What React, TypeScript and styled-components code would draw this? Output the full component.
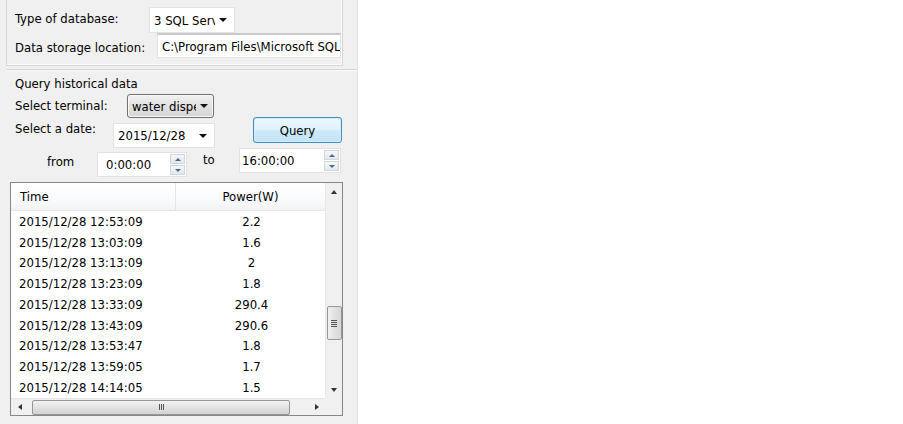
import React from "react";
import styled, { createGlobalStyle } from "styled-components";

const FONT = `"DejaVu Sans Condensed", "Liberation Sans", Arial, sans-serif`;

const Global = createGlobalStyle`
  html, body { margin: 0; padding: 0; background: #ffffff; }
  body { font-family: ${FONT}; font-size: 13px; color: #000; }
  * { box-sizing: border-box; }
`;

const Page = styled.div`
  width: 903px;
  height: 424px;
  display: flex;
  background: #fff;
`;

const Panel = styled.div`
  width: 358px;
  height: 424px;
  background: #f0f0f0;
  border-right: 1px solid #e3e3e3;
  display: flex;
  flex-direction: column;
`;

const TopGroup = styled.div`
  margin-left: 6px;
  width: 337px;
  height: 66px;
  border: 1px solid #d6d6d6;
  border-top: none;
  box-shadow: inset -1px -1px 0 #fafafa;
  padding: 7px 0 0 8px;
  display: flex;
  flex-direction: column;
  gap: 4px;
`;

const Row = styled.div<{ $h?: number; $mt?: number; $pl?: number }>`
  display: flex;
  align-items: flex-start;
  height: ${(p) => p.$h ?? 24}px;
  margin-top: ${(p) => p.$mt ?? 0}px;
  padding-left: ${(p) => p.$pl ?? 0}px;
`;

const Label = styled.div<{ $w?: number; $mt?: number; $pl?: number }>`
  width: ${(p) => (p.$w ? `${p.$w}px` : "auto")};
  flex: none;
  margin-top: ${(p) => p.$mt ?? 0}px;
  padding-left: ${(p) => p.$pl ?? 0}px;
  line-height: 16px;
  white-space: nowrap;
`;

const WhiteCombo = styled.div<{ $w: number; $h: number; $mt?: number }>`
  width: ${(p) => p.$w}px;
  height: ${(p) => p.$h}px;
  margin-top: ${(p) => p.$mt ?? 0}px;
  flex: none;
  background: #fff;
  border: 1px solid #e2e2e2;
  display: flex;
  align-items: center;
  padding-left: 4px;
  padding-right: 7px;
  overflow: hidden;
  white-space: nowrap;
`;

const ComboText = styled.span`
  flex: 1;
  overflow: hidden;
  white-space: nowrap;
`;

const Arrow = styled.span`
  flex: none;
  width: 0;
  height: 0;
  border-left: 4px solid transparent;
  border-right: 4px solid transparent;
  border-top: 4px solid #111;
  margin-left: 4px;
`;

const TextInput = styled.div<{ $w: number }>`
  width: ${(p) => p.$w}px;
  height: 25px;
  flex: none;
  background: #fff;
  border: 1px solid #e2e2e2;
  border-top: 2px solid #c9c9c9;
  display: flex;
  align-items: center;
  padding-left: 4px;
  overflow: hidden;
  white-space: nowrap;
  margin-top: -4px;
`;

const QuerySection = styled.div`
  margin-top: 3px;
  margin-left: 6px;
  border-top: 1px solid #d6d6d6;
  box-shadow: inset 0 1px 0 #fafafa;
  padding: 6px 0 0 9px;
  display: flex;
  flex-direction: column;
`;

const SectionTitle = styled.div`
  line-height: 16px;
  height: 16px;
`;

const ButtonCombo = styled.div`
  width: 87px;
  height: 24px;
  flex: none;
  border: 1px solid #707070;
  border-radius: 3px;
  background: linear-gradient(#f2f2f2, #e1e1e1 50%, #d6d6d6);
  box-shadow: inset 0 0 0 1px #fafafa;
  display: flex;
  align-items: center;
  padding-left: 4px;
  padding-right: 5px;
  overflow: hidden;
`;

const QueryButton = styled.button<{ $ml: number }>`
  margin-left: ${(p) => p.$ml}px;
  width: 89px;
  height: 26px;
  flex: none;
  border: 1px solid #3c8fc4;
  border-radius: 3px;
  background: linear-gradient(#eef8fd, #e0f2fb 48%, #cfeaf8 52%, #c2e3f5);
  box-shadow: inset 0 0 0 1px #d6eefa;
  font-family: ${FONT};
  font-size: 13px;
  color: #000;
  padding: 0;
`;

const Spin = styled.div<{ $w: number; $mt?: number }>`
  width: ${(p) => p.$w}px;
  height: 25px;
  flex: none;
  margin-top: ${(p) => p.$mt ?? 0}px;
  background: #fff;
  border: 1px solid #e2e2e2;
  display: flex;
  align-items: center;
  padding-left: 2px;
`;

const SpinText = styled.span<{ $pl?: number }>`
  flex: 1;
  padding-left: ${(p) => p.$pl ?? 0}px;
`;

const SpinButtons = styled.div`
  width: 15px;
  height: 21px;
  margin-right: 1px;
  display: flex;
  flex-direction: column;
  gap: 1px;
`;

const SpinBtn = styled.div<{ $up?: boolean }>`
  flex: 1;
  border: 1px solid #d2d7de;
  background: linear-gradient(#f5f7f9, #e3e8ee);
  display: flex;
  align-items: center;
  justify-content: center;
  &::after {
    content: "";
    width: 0;
    height: 0;
    border-left: 3px solid transparent;
    border-right: 3px solid transparent;
    ${(p) =>
      p.$up
        ? "border-bottom: 3px solid #4d6a8c;"
        : "border-top: 3px solid #4d6a8c;"}
  }
`;

const ListBox = styled.div`
  margin: 5px 0 0 10px;
  width: 333px;
  height: 234px;
  border: 1px solid #828790;
  background: #fff;
  display: grid;
  grid-template-columns: 1fr 17px;
  grid-template-rows: 1fr 17px;
`;

const ListArea = styled.div`
  overflow: hidden;
  display: flex;
  flex-direction: column;
`;

const Header = styled.div`
  height: 28px;
  flex: none;
  display: flex;
  background: linear-gradient(#ffffff, #fafbfc 60%, #f2f3f5);
  border-bottom: 1px solid #e5e5e5;
`;

const HeadCell = styled.div<{ $w?: number; $center?: boolean }>`
  width: ${(p) => (p.$w ? `${p.$w}px` : "auto")};
  flex: ${(p) => (p.$w ? "none" : "1")};
  display: flex;
  align-items: center;
  justify-content: ${(p) => (p.$center ? "center" : "flex-start")};
  padding-left: ${(p) => (p.$center ? 0 : 9)}px;
  border-right: ${(p) => (p.$w ? "1px solid #e5e5e5" : "none")};
`;

const DataRow = styled.div`
  height: 20.75px;
  flex: none;
  display: flex;
  align-items: center;
`;

const TimeCell = styled.div`
  width: 165px;
  padding-left: 8px;
  white-space: nowrap;
`;

const ValueCell = styled.div`
  flex: 1;
  text-align: center;
  padding-left: 2px;
`;

const VScroll = styled.div`
  background: #f0f0f0;
  border-left: 1px solid #e8e8e8;
  display: flex;
  flex-direction: column;
  align-items: center;
`;

const ScrollArrow = styled.div<{ $dir: "up" | "down" | "left" | "right" }>`
  width: 17px;
  height: 17px;
  flex: none;
  display: flex;
  align-items: center;
  justify-content: center;
  &::after {
    content: "";
    width: 0;
    height: 0;
    ${(p) =>
      p.$dir === "up"
        ? "border-left:3.5px solid transparent;border-right:3.5px solid transparent;border-bottom:4px solid #333;"
        : p.$dir === "down"
        ? "border-left:3.5px solid transparent;border-right:3.5px solid transparent;border-top:4px solid #333;"
        : p.$dir === "left"
        ? "border-top:3.5px solid transparent;border-bottom:3.5px solid transparent;border-right:4px solid #333;"
        : "border-top:3.5px solid transparent;border-bottom:3.5px solid transparent;border-left:4px solid #333;"}
  }
`;

const VTrack = styled.div`
  flex: 1;
  width: 100%;
  display: flex;
  flex-direction: column;
  padding-top: 106px;
  align-items: center;
`;

const VThumb = styled.div`
  width: 15px;
  height: 34px;
  border: 1px solid #979797;
  border-radius: 2px;
  background: linear-gradient(90deg, #f0f0f0, #e2e2e2 50%, #d6d6d6);
  display: flex;
  flex-direction: column;
  align-items: center;
  justify-content: center;
  gap: 1px;
`;

const GripLineH = styled.div`
  width: 6px;
  height: 1px;
  background: #555;
`;

const HScroll = styled.div`
  background: #f0f0f0;
  border-top: 1px solid #e8e8e8;
  display: flex;
  align-items: center;
`;

const HTrack = styled.div`
  flex: 1;
  height: 100%;
  display: flex;
  align-items: center;
  padding-left: 4px;
  padding-right: 18px;
`;

const HThumb = styled.div`
  flex: 1;
  height: 15px;
  border: 1px solid #979797;
  border-radius: 2px;
  background: linear-gradient(#f2f2f2, #e2e2e2 50%, #d3d3d3);
  display: flex;
  align-items: center;
  justify-content: center;
  gap: 1px;
`;

const GripLineV = styled.div`
  width: 1px;
  height: 6px;
  background: #555;
`;

const Corner = styled.div`
  background: #f0f0f0;
`;

const rows: [string, string][] = [
  ["2015/12/28 12:53:09", "2.2"],
  ["2015/12/28 13:03:09", "1.6"],
  ["2015/12/28 13:13:09", "2"],
  ["2015/12/28 13:23:09", "1.8"],
  ["2015/12/28 13:33:09", "290.4"],
  ["2015/12/28 13:43:09", "290.6"],
  ["2015/12/28 13:53:47", "1.8"],
  ["2015/12/28 13:59:05", "1.7"],
  ["2015/12/28 14:14:05", "1.5"],
];

export default function App() {
  return (
    <>
      <Global />
      <Page>
        <Panel>
          <TopGroup>
            <Row $h={26}>
              <Label $w={134} $mt={4}>Type of database:</Label>
              <WhiteCombo $w={86} $h={26}>
                <ComboText>3 SQL Server</ComboText>
                <Arrow />
              </WhiteCombo>
            </Row>
            <Row $h={25}>
              <Label $w={142} $mt={3}>Data storage location:</Label>
              <TextInput $w={184}>C:\Program Files\Microsoft SQL Server</TextInput>
            </Row>
          </TopGroup>
          <QuerySection>
            <SectionTitle>Query historical data</SectionTitle>
            <Row $h={24} $mt={2}>
              <Label $w={112} $mt={4}>Select terminal:</Label>
              <ButtonCombo>
                <ComboText>water dispenser</ComboText>
                <Arrow />
              </ButtonCombo>
            </Row>
            <Row $h={31} $mt={-1}>
              <Label $w={98} $mt={4}>Select a date:</Label>
              <WhiteCombo $w={102} $h={25} $mt={6}>
                <ComboText>2015/12/28</ComboText>
                <Arrow />
              </WhiteCombo>
              <QueryButton $ml={38}>Query</QueryButton>
            </Row>
            <Row $h={29} $pl={32}>
              <Label $w={50} $mt={6}>from</Label>
              <Spin $w={90} $mt={4}>
                <SpinText $pl={6}>0:00:00</SpinText>
                <SpinButtons>
                  <SpinBtn $up />
                  <SpinBtn />
                </SpinButtons>
              </Spin>
              <Label $w={52} $mt={4} $pl={16}>to</Label>
              <Spin $w={102}>
                <SpinText>16:00:00</SpinText>
                <SpinButtons>
                  <SpinBtn $up />
                  <SpinBtn />
                </SpinButtons>
              </Spin>
            </Row>
          </QuerySection>
          <ListBox>
            <ListArea>
              <Header>
                <HeadCell $w={165}>Time</HeadCell>
                <HeadCell $center>Power(W)</HeadCell>
              </Header>
              {rows.map(([t, v]) => (
                <DataRow key={t}>
                  <TimeCell>{t}</TimeCell>
                  <ValueCell>{v}</ValueCell>
                </DataRow>
              ))}
            </ListArea>
            <VScroll>
              <ScrollArrow $dir="up" />
              <VTrack>
                <VThumb>
                  <GripLineH />
                  <GripLineH />
                  <GripLineH />
                  <GripLineH />
                </VThumb>
              </VTrack>
              <ScrollArrow $dir="down" />
            </VScroll>
            <HScroll>
              <ScrollArrow $dir="left" />
              <HTrack>
                <HThumb>
                  <GripLineV />
                  <GripLineV />
                  <GripLineV />
                </HThumb>
              </HTrack>
              <ScrollArrow $dir="right" />
            </HScroll>
            <Corner />
          </ListBox>
        </Panel>
      </Page>
    </>
  );
}
